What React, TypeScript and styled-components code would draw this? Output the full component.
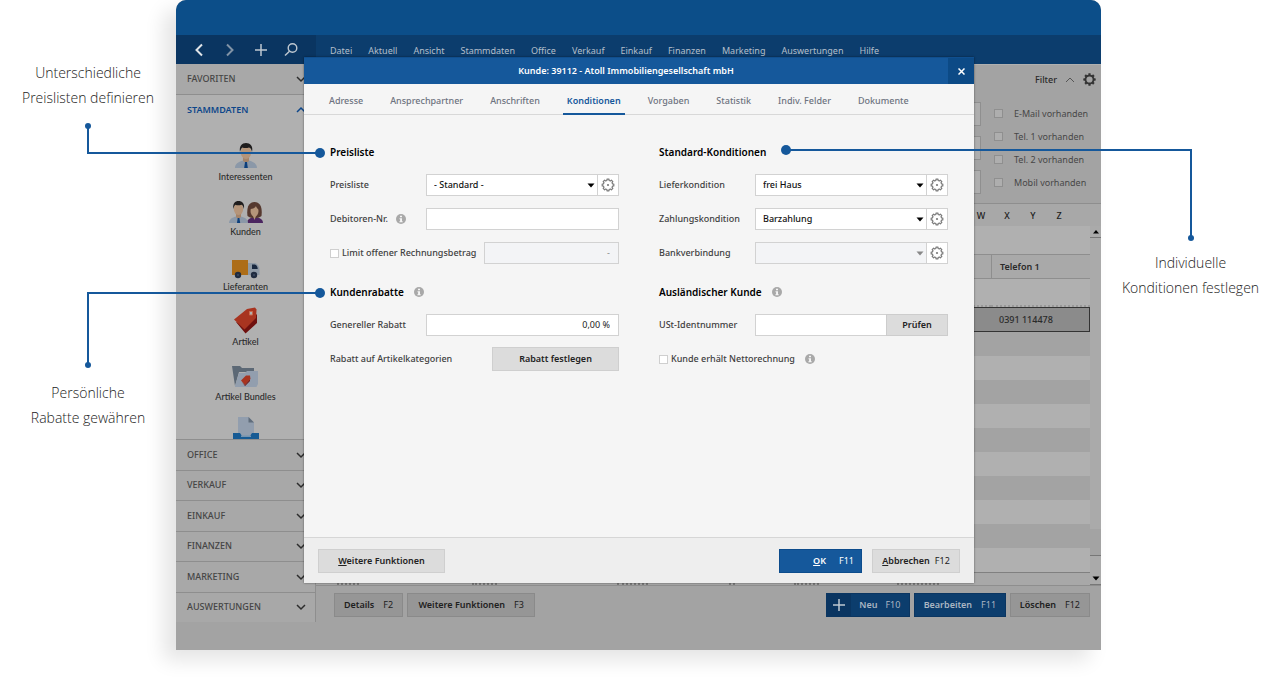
import React from "react";
import styled, { createGlobalStyle, css } from "styled-components";

const color = {
  accent: "#15589b",
  accentDark: "#0c4a86",
  navDark: "#0a3561",
  nav: "#0c3d6d",
  shade: "#a3a3a3",
  light: "#b0b0b0",
  line: "#8e8e8e",
  ink: "#2a2a2a",
};

const GlobalStyle = createGlobalStyle`
  *, *::before, *::after { box-sizing: border-box; }
  body { margin: 0; background: #fff; }
  body, button, input, select {
    font-family: "Noto Sans", "Open Sans", sans-serif;
    font-size: 9px;
    line-height: 12px;
  }
  button { border: 0; padding: 0; margin: 0; background: none; color: inherit; }
  a { color: inherit; text-decoration: none; }
  svg { display: block; flex: none; }
`;

/* ---------- page and callouts ---------- */

const Page = styled.div`
  position: relative;
  display: flex;
  min-height: 100vh;
  align-items: flex-start;
`;

const Side = styled.aside<{ $width: number; $top: number }>`
  flex: none;
  width: ${(p) => p.$width}px;
  padding-top: ${(p) => p.$top}px;
  display: flex;
  flex-direction: column;
  gap: 270px;
`;

const Caption = styled.p`
  margin: 0;
  text-align: center;
  font-family: "Open Sans", sans-serif;
  font-weight: 350;
  font-size: 14px;
  line-height: 25px;
  color: #1c1c1c;
  white-space: nowrap;
`;

const Connector = styled.i<{ $kind: "down" | "up" | "right" }>`
  position: absolute;
  z-index: 5;
  pointer-events: none;
  border: 0 solid ${color.accent};
  &::before, &::after {
    content: "";
    position: absolute;
    border-radius: 50%;
    background: ${color.accent};
  }
  &::before { width: 6px; height: 6px; }
  &::after { width: 10px; height: 10px; }
  ${(p) => p.$kind === "down" && css`
    left: 87px; width: 233px; top: 126px; height: 28px;
    border-left-width: 2px; border-bottom-width: 2px;
    &::before { left: -4px; top: -3px; }
    &::after { right: -5px; bottom: -6px; }
  `}
  ${(p) => p.$kind === "up" && css`
    left: 87px; width: 233px; top: 292px; height: 73px;
    border-left-width: 2px; border-top-width: 2px;
    &::before { left: -4px; bottom: -3px; }
    &::after { right: -5px; top: -6px; }
  `}
  ${(p) => p.$kind === "right" && css`
    left: calc(50% + 146px); right: 88px; top: 149px; height: 89px;
    border-right-width: 2px; border-top-width: 2px;
    &::before { right: -4px; bottom: -3px; }
    &::after { left: -5px; top: -6px; }
  `}
`;

/* ---------- application window ---------- */

const Window = styled.div`
  position: relative;
  flex: 1;
  min-width: 0;
  min-height: calc(100vh - 33px);
  display: flex;
  flex-direction: column;
  border-radius: 10px 10px 0 0;
  background: ${color.shade};
  box-shadow: -12px 10px 20px rgba(0, 0, 0, 0.11);
`;

const Banner = styled.header`
  height: 35px;
  border-radius: 10px 10px 0 0;
  background: #0c4e89;
`;

const NavBar = styled.nav`
  display: flex;
  height: 29px;
  background: ${color.nav};
  color: #b4bfca;
`;

const NavTools = styled.div`
  display: flex;
  align-items: center;
  justify-content: space-between;
  width: 140px;
  padding: 0 18px 0 16px;
  background: ${color.navDark};
`;

const Menu = styled.div`
  display: flex;
  gap: 16px;
  padding: 10px 0 0 14px;
  white-space: nowrap;
`;

const Workspace = styled.div`
  flex: 1;
  display: flex;
  padding-bottom: 28px;
`;

const Sidebar = styled.div`
  width: 140px;
  display: flex;
  flex-direction: column;
  border-right: 1px solid ${color.line};
`;

const GroupButton = styled.button<{ $open?: boolean }>`
  display: flex;
  align-items: center;
  justify-content: space-between;
  min-height: 30px;
  padding: 0 9px 0 11px;
  width: 100%;
  text-align: left;
  color: ${(p) => (p.$open ? "#0c468a" : "#454545")};
  font-weight: ${(p) => (p.$open ? 600 : 500)};
  background: ${(p) => (p.$open ? color.light : "#a8a8a8")};
`;

const OpenGroup = styled.div`
  flex: 1 1 0;
  min-height: 0;
  overflow: hidden;
  border-top: 1px solid ${color.line};
  background: ${color.light};
`;

const ModuleList = styled.div`
  display: flex;
  flex-direction: column;
  padding-top: 16px;
`;

const Module = styled.a`
  display: flex;
  flex-direction: column;
  align-items: center;
  gap: 2px;
  height: 55px;
  font-family: Lato, "Noto Sans", sans-serif;
  font-weight: 500;
  color: ${color.ink};
`;

const ModuleIcon = styled.span`
  display: flex;
  align-items: flex-end;
  height: 28px;
`;

const ClosedGroups = styled.div`
  display: grid;
  grid-auto-rows: 1fr;
  height: 183px;
  > button { border-top: 1px solid ${color.line}; }
`;

const Main = styled.main`
  flex: 1;
  min-width: 0;
  display: flex;
  flex-direction: column;
`;

const FilterPanel = styled.section`
  height: 140px;
  display: flex;
  flex-direction: column;
  gap: 15px;
  border-top: 1px solid ${color.light};
  border-bottom: 1px solid ${color.line};
`;

const FilterHead = styled.div`
  display: flex;
  align-items: center;
  justify-content: flex-end;
  gap: 8px;
  height: 22px;
  padding: 7px 5px 0 0;
  color: ${color.ink};
  font-weight: 500;
`;

const FilterBody = styled.div`
  display: flex;
  justify-content: flex-end;
`;

const FilterInputs = styled.div`
  display: flex;
  flex-direction: column;
  gap: 10px;
  width: 60px;
  margin-right: 13px;
`;

const FilterInput = styled.input`
  width: 100%;
  height: 24px;
  border: 1px solid #8f8f8f;
  background: #aeaeae;
`;

const FilterChecks = styled.div`
  display: flex;
  flex-direction: column;
  width: 107px;
`;

const FilterCheck = styled.label`
  display: flex;
  align-items: center;
  gap: 11px;
  height: 23px;
  color: #474747;
  white-space: nowrap;
`;

const Tick = styled.input<{ $dim?: boolean }>`
  appearance: none;
  flex: none;
  margin: 0;
  width: 9px;
  height: 9px;
  border: 1px solid ${(p) => (p.$dim ? "#8f8f8f" : "#cfcfcf")};
  background: ${(p) => (p.$dim ? "#aeaeae" : "#fff")};
`;

const Letters = styled.div`
  display: flex;
  justify-content: flex-end;
  align-items: center;
  height: 22px;
  padding: 2px 29px 0 0;
  background: #a8a8a8;
  color: #202020;
  > a { width: 26px; text-align: center; font-weight: 500; }
`;

const TableArea = styled.div`
  flex: 1;
  display: flex;
  min-height: 0;
  border-bottom: 1px solid ${color.line};
`;

const TableColumn = styled.div`
  flex: 1;
  min-width: 0;
  display: flex;
  flex-direction: column;
`;

const Grid = styled.table`
  width: 100%;
  border-collapse: separate;
  border-spacing: 0;
  table-layout: fixed;
  background: ${color.light};
  th, td { padding: 0; height: 24px; text-align: left; color: ${color.ink}; }
  th:last-child, td:last-child { width: 99px; padding-left: 8px; }
  .gap td { height: 28px; }
  th { height: 25px; background: #a9a9a9; border-top: 1px solid ${color.line}; border-bottom: 1px solid ${color.line}; font-weight: 600; }
  th:last-child { border-left: 1px solid ${color.line}; }
  .filter td { height: 28px; border-bottom: 2px dotted #989898; }
  .selected td { height: 25px; background: #8b8b8b; border-top: 1px solid #333; border-bottom: 1px solid #333; font-weight: 500; }
  .selected td:last-child { border-right: 1px solid #333; }
  .odd td { background: ${color.shade}; }
`;

const TableFoot = styled.div`
  flex: 1;
  display: flex;
  align-items: flex-end;
  padding-left: 21px;
  border-top: 1px solid #808080;
  background: #a8a8a8;
`;

const SumMark = styled.i<{ $cell: number; $mark: number }>`
  width: ${(p) => p.$cell}px;
  &::after {
    content: "";
    display: block;
    width: ${(p) => p.$mark}px;
    border-bottom: 2px dotted #7a7a7a;
  }
`;

const Scroll = styled.div`
  display: flex;
  flex-direction: column;
  justify-content: space-between;
  width: 11px;
  background: #aaa;
`;

const ScrollButton = styled.button`
  display: grid;
  place-items: center;
  height: 12px;
  border-bottom: 1px solid #777;
`;

const ScrollThumb = styled.span`
  height: 27px;
  margin: auto 0 17px;
  border-bottom: 1px solid #777;
  background: #a3a3a3;
`;

const ActionBar = styled.div`
  display: flex;
  gap: 4px;
  height: 36px;
  padding: 7px 11px 5px 18px;
`;

const Spacer = styled.span`
  flex: 1;
`;

const Action = styled.button<{ $tone: "grey" | "navy" | "blue" | "plain"; $width?: number; $gap?: number }>`
  display: flex;
  align-items: center;
  justify-content: center;
  gap: ${(p) => p.$gap ?? 9}px;
  height: 24px;
  padding: 0 9px;
  min-width: ${(p) => p.$width ?? 0}px;
  font-weight: 600;
  white-space: nowrap;
  > kbd { font: inherit; font-weight: 400; }
  ${(p) => p.$tone === "grey" && css`background: #969696; border: 1px solid #8a8a8a; color: #202020;`}
  ${(p) => p.$tone === "navy" && css`background: #0c3d6d; border: 1px solid #0a3561; color: #aab6c3; padding: 0 8px;`}
  ${(p) => p.$tone === "blue" && css`background: ${color.accent}; border: 1px solid #0d4c8c; color: #fff; padding: 0 7px;`}
  ${(p) => p.$tone === "plain" && css`background: #dcdcdc; border: 1px solid #cfcfcf; color: #222;`}
`;

const PlusCell = styled.span`
  display: grid;
  place-items: center;
  align-self: stretch;
  width: 24px;
  margin-left: -8px;
  background: ${color.navDark};
`;

/* ---------- dialog ---------- */

const Dialog = styled.div`
  position: absolute;
  z-index: 2;
  top: 57px;
  bottom: 67px;
  left: 128px;
  right: 127px;
  display: flex;
  flex-direction: column;
  background: #f5f5f5;
  box-shadow: 0 0 2px rgba(0, 0, 0, 0.5);
`;

const TitleBar = styled.div`
  display: flex;
  height: 27px;
  background: ${color.accent};
  border-top: 1px solid #104f8f;
  color: #fff;
`;

const DialogTitle = styled.h1`
  flex: 1;
  margin: 0;
  text-align: center;
  font-size: 9px;
  line-height: 26px;
  font-weight: 600;
`;

const Close = styled.button`
  display: grid;
  place-items: center;
  width: 26px;
  background: ${color.accentDark};
`;

const Tabs = styled.div`
  display: flex;
  gap: 19px;
  height: 31px;
  padding: 0 21px;
  border-bottom: 1px solid #d8d8d8;
`;

const Tab = styled.button<{ $active?: boolean }>`
  padding: 4px 4px 0;
  height: 31px;
  border-bottom: 2px solid ${(p) => (p.$active ? color.accent : "transparent")};
  color: ${(p) => (p.$active ? color.accent : "#6d7380")};
  font-weight: ${(p) => (p.$active ? 600 : 500)};
  white-space: nowrap;
`;

const Form = styled.div`
  flex: 1;
  display: grid;
  grid-template-columns: minmax(0, 1fr) minmax(0, 1fr);
  align-content: start;
  column-gap: 40px;
  padding: 27px 26px;
`;

const Column = styled.div`
  display: flex;
  flex-direction: column;
  gap: 12px;
`;

const Heading = styled.h2<{ $later?: boolean }>`
  display: flex;
  align-items: center;
  gap: 10px;
  height: 20px;
  margin: ${(p) => (p.$later ? "6px" : "0")} 0 0;
  font-size: 10px;
  line-height: 20px;
  font-weight: 600;
  color: #000;
`;

const Row = styled.div`
  display: flex;
  align-items: center;
  height: 22px;
  color: #404040;
`;

const Label = styled.label<{ $width?: number }>`
  display: flex;
  align-items: center;
  gap: 8px;
  flex: none;
  width: ${(p) => (p.$width ? `${p.$width}px` : "auto")};
  white-space: nowrap;
  font-weight: 500;
`;

const CheckLabel = styled(Label)`
  gap: 3px;
`;

const Box = styled.div<{ $off?: boolean }>`
  position: relative;
  flex: 1;
  display: flex;
  min-width: 0;
  height: 22px;
  border: 1px solid #d2d2d2;
  background: ${(p) => (p.$off ? "#f3f4f6" : "#fff")};
`;

const Text = styled.input`
  flex: 1;
  min-width: 0;
  padding: 0 8px;
  border: 0;
  background: transparent;
  color: #222;
  text-align: right;
  &:disabled { color: #888; }
`;

const Select = styled.select`
  appearance: none;
  flex: 1;
  min-width: 0;
  padding: 0 7px;
  border: 0;
  background: transparent;
  color: #111;
  font-weight: 500;
`;

const Arrow = styled.span`
  position: absolute;
  right: 23px;
  top: 8px;
  pointer-events: none;
`;

const GearButton = styled.button`
  display: grid;
  place-items: center;
  width: 21px;
  border-left: 1px solid #d2d2d2;
  background: #fff;
`;

const CheckButton = styled.button`
  width: 62px;
  margin: -1px;
  border: 1px solid #cdcdcd;
  background: #dcdcdc;
  color: #222;
  font-weight: 600;
`;

const DialogFoot = styled.footer`
  display: flex;
  align-items: center;
  gap: 10px;
  height: 46px;
  padding: 0 14px;
  border-top: 1px solid #d6d6d6;
  background: #eee;
`;

const FootActions = styled.div`
  display: flex;
  gap: 10px;
`;

/* ---------- icons ---------- */

function gearPath(teeth: number, outer: number, inner: number, c: number) {
  const step = (Math.PI * 2) / teeth;
  const at = (r: number, a: number) => `${(c + r * Math.cos(a)).toFixed(2)} ${(c + r * Math.sin(a)).toFixed(2)}`;
  let d = "";
  for (let i = 0; i < teeth; i++) {
    const a = i * step;
    d += `${i ? "L" : "M"}${at(inner, a - step * 0.3)}L${at(outer, a - step * 0.22)}L${at(outer, a + step * 0.22)}L${at(inner, a + step * 0.3)}`;
  }
  return d + "Z";
}

const Gear = () => (
  <svg width="14" height="14" viewBox="0 0 14 14" fill="none" stroke="#7a7a7a" strokeWidth="1.200" strokeLinejoin="round">
    <path d={gearPath(8, 5.9, 4.7, 7)} />
    <circle cx="7" cy="7" r="1.100" fill="#7a7a7a" stroke="none" />
  </svg>
);

const FilterGear = () => (
  <svg width="13" height="13" viewBox="0 0 13 13" fill="#333" fillRule="evenodd">
    <path d={gearPath(8, 6.3, 4.9, 6.5) + "M6.5 3.4a3.1 3.1 0 1 0 0 6.2a3.1 3.1 0 1 0 0-6.2Z"} />
  </svg>
);

const Chevron = ({ up, thin, color: stroke = "#2d2d2d" }: { up?: boolean; thin?: boolean; color?: string }) => (
  <svg width="10" height="10" viewBox="0 0 10 10" fill="none" stroke={stroke} strokeWidth={thin ? 1 : 1.5}>
    <path d={up ? "M1 7l4-4 4 4" : "M1 3l4 4 4-4"} />
  </svg>
);

const Triangle = ({ fill = "#000", up }: { fill?: string; up?: boolean }) => (
  <svg width="8" height="5" viewBox="0 0 8 5" fill={fill}>
    <path d={up ? "M1 4.500h6L4 1z" : "M.5.5h7L4 4.500z"} />
  </svg>
);

const Info = () => (
  <svg width="10" height="10" viewBox="0 0 10 10">
    <circle cx="5" cy="5" r="5" fill="#a9a9a9" />
    <path d="M4 1.700h2v1.500H4zM3.500 4.200H6V7.300h.7v1H3.400v-1H4.100V5.200H3.500z" fill="#f5f5f5" />
  </svg>
);

const Person = () => (
  <svg width="22" height="27" viewBox="0 0 22 27">
    <path d="M0 26c0-4 3-6 8-7.500h6c5 1.500 8 3.500 8 7.500z" fill="#8b98a8" />
    <path d="M8 15h6v4l-3 2-3-2z" fill="#a58469" />
    <path d="M10 20h2l.8 6H9.200z" fill="#0c3f7c" />
    <ellipse cx="11" cy="10.500" rx="5.200" ry="6.500" fill="#b5957a" />
    <path d="M5 10C4 4 7 1 11 1s7.500 3 6 9c-.7-3-1.500-4-3-4.500-2 .8-5 .8-6.500 0C6 6.500 5.500 8 5 10z" fill="#1f1d1d" />
  </svg>
);

const People = () => (
  <svg width="34" height="24" viewBox="0 0 34 24">
    <path d="M18 23c0-3.500 3-5 6-5.500h4c3 .5 6 2 6 5.500z" fill="#4b2560" />
    <path d="M18.500 16c-1-8 1-14 7-14s8 6 7 14c-4 3-10 3-14 0z" fill="#56392f" />
    <ellipse cx="25.500" cy="11" rx="4" ry="5.500" fill="#b5957a" />
    <path d="M21 9c3 0 5-1 6-3 .5 2 1.500 3 3 3.500C30 5 28 4 25.500 4S21 5.500 21 9z" fill="#56392f" />
    <path d="M24 16h3l-1.500 4z" fill="#b5957a" />
    <path d="M0 23c0-3.500 3-5.500 7-6.500h5c4 1 7 3 7 6.500z" fill="#8b98a8" />
    <path d="M7 13h5v4l-2.500 2L7 17z" fill="#a58469" />
    <path d="M8.700 18h1.700l.8 5H8z" fill="#0c3f7c" />
    <ellipse cx="9.500" cy="9" rx="4.700" ry="6" fill="#b5957a" />
    <path d="M4.300 9C3.500 3.500 6 1 9.500 1s6.500 2.500 5.400 8c-.6-3-1.200-4-2.400-4.300-2 .7-4.500.7-6 0C5.200 5.500 4.800 7 4.300 9z" fill="#1f1d1d" />
  </svg>
);

const Truck = () => (
  <svg width="28" height="20" viewBox="0 0 28 20">
    <path d="M0 1h16v15H0z" fill="#ad6d18" />
    <path d="M16 4h7c3 1 4.500 4 4.500 7v5H16z" fill="#8f9aa6" />
    <path d="M20 5.500h3c2 .8 2.500 2.500 2.700 4.500H20z" fill="#18273f" />
    <circle cx="6" cy="16" r="3.200" fill="#202c40" />
    <circle cx="22" cy="16" r="3.200" fill="#202c40" />
    <circle cx="6" cy="16" r="1" fill="#3b4960" />
    <circle cx="22" cy="16" r="1" fill="#3b4960" />
  </svg>
);

const Tag = () => (
  <svg width="24" height="27" viewBox="0 0 24 27">
    <path d="M2 15l9.500 11.500L23 16V7L12 17z" fill="#6f100e" />
    <path d="M0 12.500L13 2l8-1.500 1.500 2L22 11 10.500 22.500z" fill="#a83420" />
    <path d="M15.500 4.500h3v3.500h-3z" fill="#b0b0b0" stroke="#c8694d" />
  </svg>
);

const FolderTag = () => (
  <svg width="27" height="24" viewBox="0 0 27 24">
    <path d="M0 1h8l2 2h12v4H7L3 21z" fill="#5c6875" />
    <path d="M3 21L7 8h6l2-2h11v13l-1.500 3H3z" fill="#929eae" />
    <path d="M9 15.500l5-5h4l.5 3.500-5.500 6z" fill="#a83420" />
    <path d="M10 17l3 3 5-5.500v1.500L13 21z" fill="#6f100e" />
  </svg>
);

const Tray = () => (
  <svg width="26" height="28" viewBox="0 0 26 28">
    <path d="M5 1h10.500L21 6.500V20H5z" fill="#929eae" />
    <path d="M15.500 1L21 6.500h-5.500z" fill="#5f6c7b" />
    <path d="M0 17h7l2 3h8l2-3h7v11H0z" fill="#175b94" />
    <path d="M8 19.500h10v1.500H8z" fill="#7594b0" />
  </svg>
);

const Plus = () => (
  <svg width="12" height="12" viewBox="0 0 12 12" stroke="#bfc8d1" strokeWidth="1.500">
    <path d="M6 0v12M0 6h12" />
  </svg>
);

/* ---------- content ---------- */

const menuItems = ["Datei", "Aktuell", "Ansicht", "Stammdaten", "Office", "Verkauf", "Einkauf", "Finanzen", "Marketing", "Auswertungen", "Hilfe"];
const tabItems = ["Adresse", "Ansprechpartner", "Anschriften", "Konditionen", "Vorgaben", "Statistik", "Indiv. Felder", "Dokumente"];
const closedGroups = ["OFFICE", "VERKAUF", "EINKAUF", "FINANZEN", "MARKETING", "AUSWERTUNGEN"];
const sumMarks = [[135, 22], [145, 25], [112, 31], [65, 6], [103, 25], [42, 42]];
const modules: [string, React.ReactNode][] = [
  ["Interessenten", <Person />],
  ["Kunden", <People />],
  ["Lieferanten", <Truck />],
  ["Artikel", <Tag />],
  ["Artikel Bundles", <FolderTag />],
  ["", <Tray />],
];

function SelectField({ id, label, value, off }: { id: string; label: string; value?: string; off?: boolean }) {
  return (
    <Row>
      <Label htmlFor={id} $width={96}>{label}</Label>
      <Box $off={off}>
        <Select id={id} disabled={off}>{value && <option>{value}</option>}</Select>
        <Arrow><Triangle fill={off ? "#888" : "#000"} /></Arrow>
        <GearButton type="button" aria-label={`${label} bearbeiten`}><Gear /></GearButton>
      </Box>
    </Row>
  );
}

function CustomerDialog() {
  return (
    <Dialog role="dialog" aria-labelledby="dialog-title">
      <TitleBar>
        <DialogTitle id="dialog-title">Kunde: 39112 - Atoll Immobiliengesellschaft mbH</DialogTitle>
        <Close type="button" aria-label="Schließen">
          <svg width="7" height="7" viewBox="0 0 7 7" stroke="#fff" strokeWidth="1.500"><path d="M.5.5l6 6M6.500.5l-6 6" /></svg>
        </Close>
      </TitleBar>
      <Tabs role="tablist">
        {tabItems.map((t) => (
          <Tab key={t} role="tab" type="button" aria-selected={t === "Konditionen"} $active={t === "Konditionen"}>{t}</Tab>
        ))}
      </Tabs>
      <Form>
        <Column>
          <Heading>Preisliste</Heading>
          <SelectField id="preisliste" label="Preisliste" value="- Standard -" />
          <Row>
            <Label htmlFor="debitor" $width={96}>Debitoren-Nr. <Info /></Label>
            <Box><Text id="debitor" /></Box>
          </Row>
          <Row>
            <CheckLabel $width={154}><Tick type="checkbox" />Limit offener Rechnungsbetrag</CheckLabel>
            <Box $off><Text aria-label="Limit" defaultValue="-" disabled /></Box>
          </Row>
          <Heading $later>Kundenrabatte <Info /></Heading>
          <Row>
            <Label htmlFor="rabatt" $width={96}>Genereller Rabatt</Label>
            <Box><Text id="rabatt" defaultValue="0,00 %" /></Box>
          </Row>
          <Row>
            <Label as="span">Rabatt auf Artikelkategorien</Label>
            <Spacer />
            <Action type="button" $tone="plain" $width={127}>Rabatt festlegen</Action>
          </Row>
        </Column>
        <Column>
          <Heading>Standard-Konditionen</Heading>
          <SelectField id="liefer" label="Lieferkondition" value="frei Haus" />
          <SelectField id="zahlung" label="Zahlungskondition" value="Barzahlung" />
          <SelectField id="bank" label="Bankverbindung" off />
          <Heading $later>Ausländischer Kunde <Info /></Heading>
          <Row>
            <Label htmlFor="ust" $width={96}>USt-Identnummer</Label>
            <Box><Text id="ust" /><CheckButton type="button">Prüfen</CheckButton></Box>
          </Row>
          <Row>
            <CheckLabel><Tick type="checkbox" />Kunde erhält Nettorechnung</CheckLabel>
            <Label as="span">&nbsp;<Info /></Label>
          </Row>
        </Column>
      </Form>
      <DialogFoot>
        <Action type="button" $tone="plain" $width={127}><span><u>W</u>eitere Funktionen</span></Action>
        <Spacer />
        <FootActions>
          <Action type="button" $tone="blue" $width={83} $gap={13}><Spacer /><span><u>O</u>K</span><kbd>F11</kbd></Action>
          <Action type="button" $tone="plain" $width={88} $gap={5}><span><u>A</u>bbrechen</span><kbd>F12</kbd></Action>
        </FootActions>
      </DialogFoot>
    </Dialog>
  );
}

export default function App() {
  return (
    <Page>
      <GlobalStyle />
      <Side $width={176} $top={60}>
        <Caption>Unterschiedliche<br />Preislisten definieren</Caption>
        <Caption>Persönliche<br />Rabatte gewähren</Caption>
      </Side>
      <Window>
        <Banner />
        <NavBar>
          <NavTools>
            <button type="button" aria-label="Zurück">
              <svg width="14" height="14" viewBox="0 0 14 14" fill="none" stroke="#e0e4e8" strokeWidth="2"><path d="M10 1.500L4.500 7l5.500 5.500" /></svg>
            </button>
            <button type="button" aria-label="Vor">
              <svg width="14" height="14" viewBox="0 0 14 14" fill="none" stroke="#8193a6" strokeWidth="2"><path d="M4 1.500L9.500 7 4 12.500" /></svg>
            </button>
            <button type="button" aria-label="Neu"><Plus /></button>
            <button type="button" aria-label="Suchen">
              <svg width="14" height="14" viewBox="0 0 14 14" fill="none" stroke="#bfc8d1" strokeWidth="1.400"><circle cx="8.500" cy="5" r="4.300" /><path d="M5.500 8.200L1 12.500" /></svg>
            </button>
          </NavTools>
          <Menu>{menuItems.map((m) => <a key={m} href="#menu">{m}</a>)}</Menu>
        </NavBar>
        <Workspace>
          <Sidebar>
            <GroupButton type="button">FAVORITEN <Chevron /></GroupButton>
            <OpenGroup>
              <GroupButton type="button" $open>STAMMDATEN <Chevron up color="#0c468a" /></GroupButton>
              <ModuleList>
                {modules.map(([name, icon]) => (
                  <Module key={name} href="#modul" aria-label={name || "Belege"}>
                    <ModuleIcon>{icon}</ModuleIcon>
                    {name}
                  </Module>
                ))}
              </ModuleList>
            </OpenGroup>
            <ClosedGroups>
              {closedGroups.map((g) => <GroupButton key={g} type="button">{g} <Chevron /></GroupButton>)}
            </ClosedGroups>
          </Sidebar>
          <Main>
            <FilterPanel>
              <FilterHead>Filter <Chevron up thin color="#555" /><FilterGear /></FilterHead>
              <FilterBody>
                <FilterInputs>
                  <FilterInput aria-label="Filter 1" />
                  <FilterInput aria-label="Filter 2" />
                  <FilterInput aria-label="Filter 3" />
                </FilterInputs>
                <FilterChecks>
                  {["E-Mail vorhanden", "Tel. 1 vorhanden", "Tel. 2 vorhanden", "Mobil vorhanden"].map((t) => (
                    <FilterCheck key={t}><Tick type="checkbox" $dim />{t}</FilterCheck>
                  ))}
                </FilterChecks>
              </FilterBody>
            </FilterPanel>
            <Letters>{["W", "X", "Y", "Z"].map((l) => <a key={l} href="#register">{l}</a>)}</Letters>
            <TableArea>
              <TableColumn>
                <Grid>
                  <tbody>
                    <tr className="gap"><td /><td /></tr>
                    <tr><th /><th>Telefon 1</th></tr>
                    <tr className="filter"><td /><td /></tr>
                    <tr className="selected"><td /><td>0391 114478</td></tr>
                    {Array.from({ length: 10 }, (_, i) => (
                      <tr key={i} className={i % 2 ? "even" : "odd"}><td /><td /></tr>
                    ))}
                  </tbody>
                </Grid>
                <TableFoot>
                  {sumMarks.map(([cell, mark], i) => <SumMark key={i} $cell={cell} $mark={mark} />)}
                </TableFoot>
              </TableColumn>
              <Scroll>
                <ScrollButton type="button" aria-label="Nach oben"><Triangle up /></ScrollButton>
                <ScrollThumb />
                <ScrollButton type="button" aria-label="Nach unten"><Triangle /></ScrollButton>
              </Scroll>
            </TableArea>
            <ActionBar>
              <Action type="button" $tone="grey" $width={69}>Details<kbd>F2</kbd></Action>
              <Action type="button" $tone="grey" $width={128}>Weitere Funktionen<kbd>F3</kbd></Action>
              <Spacer />
              <Action type="button" $tone="navy" $width={84} $gap={8}><PlusCell><Plus /></PlusCell>Neu<kbd>F10</kbd></Action>
              <Action type="button" $tone="navy" $width={92}>Bearbeiten<kbd>F11</kbd></Action>
              <Action type="button" $tone="grey" $width={79}>Löschen<kbd>F12</kbd></Action>
            </ActionBar>
          </Main>
        </Workspace>
        <CustomerDialog />
      </Window>
      <Side $width={179} $top={250}>
        <Caption>Individuelle<br />Konditionen festlegen</Caption>
      </Side>
      <Connector $kind="down" />
      <Connector $kind="up" />
      <Connector $kind="right" />
    </Page>
  );
}
